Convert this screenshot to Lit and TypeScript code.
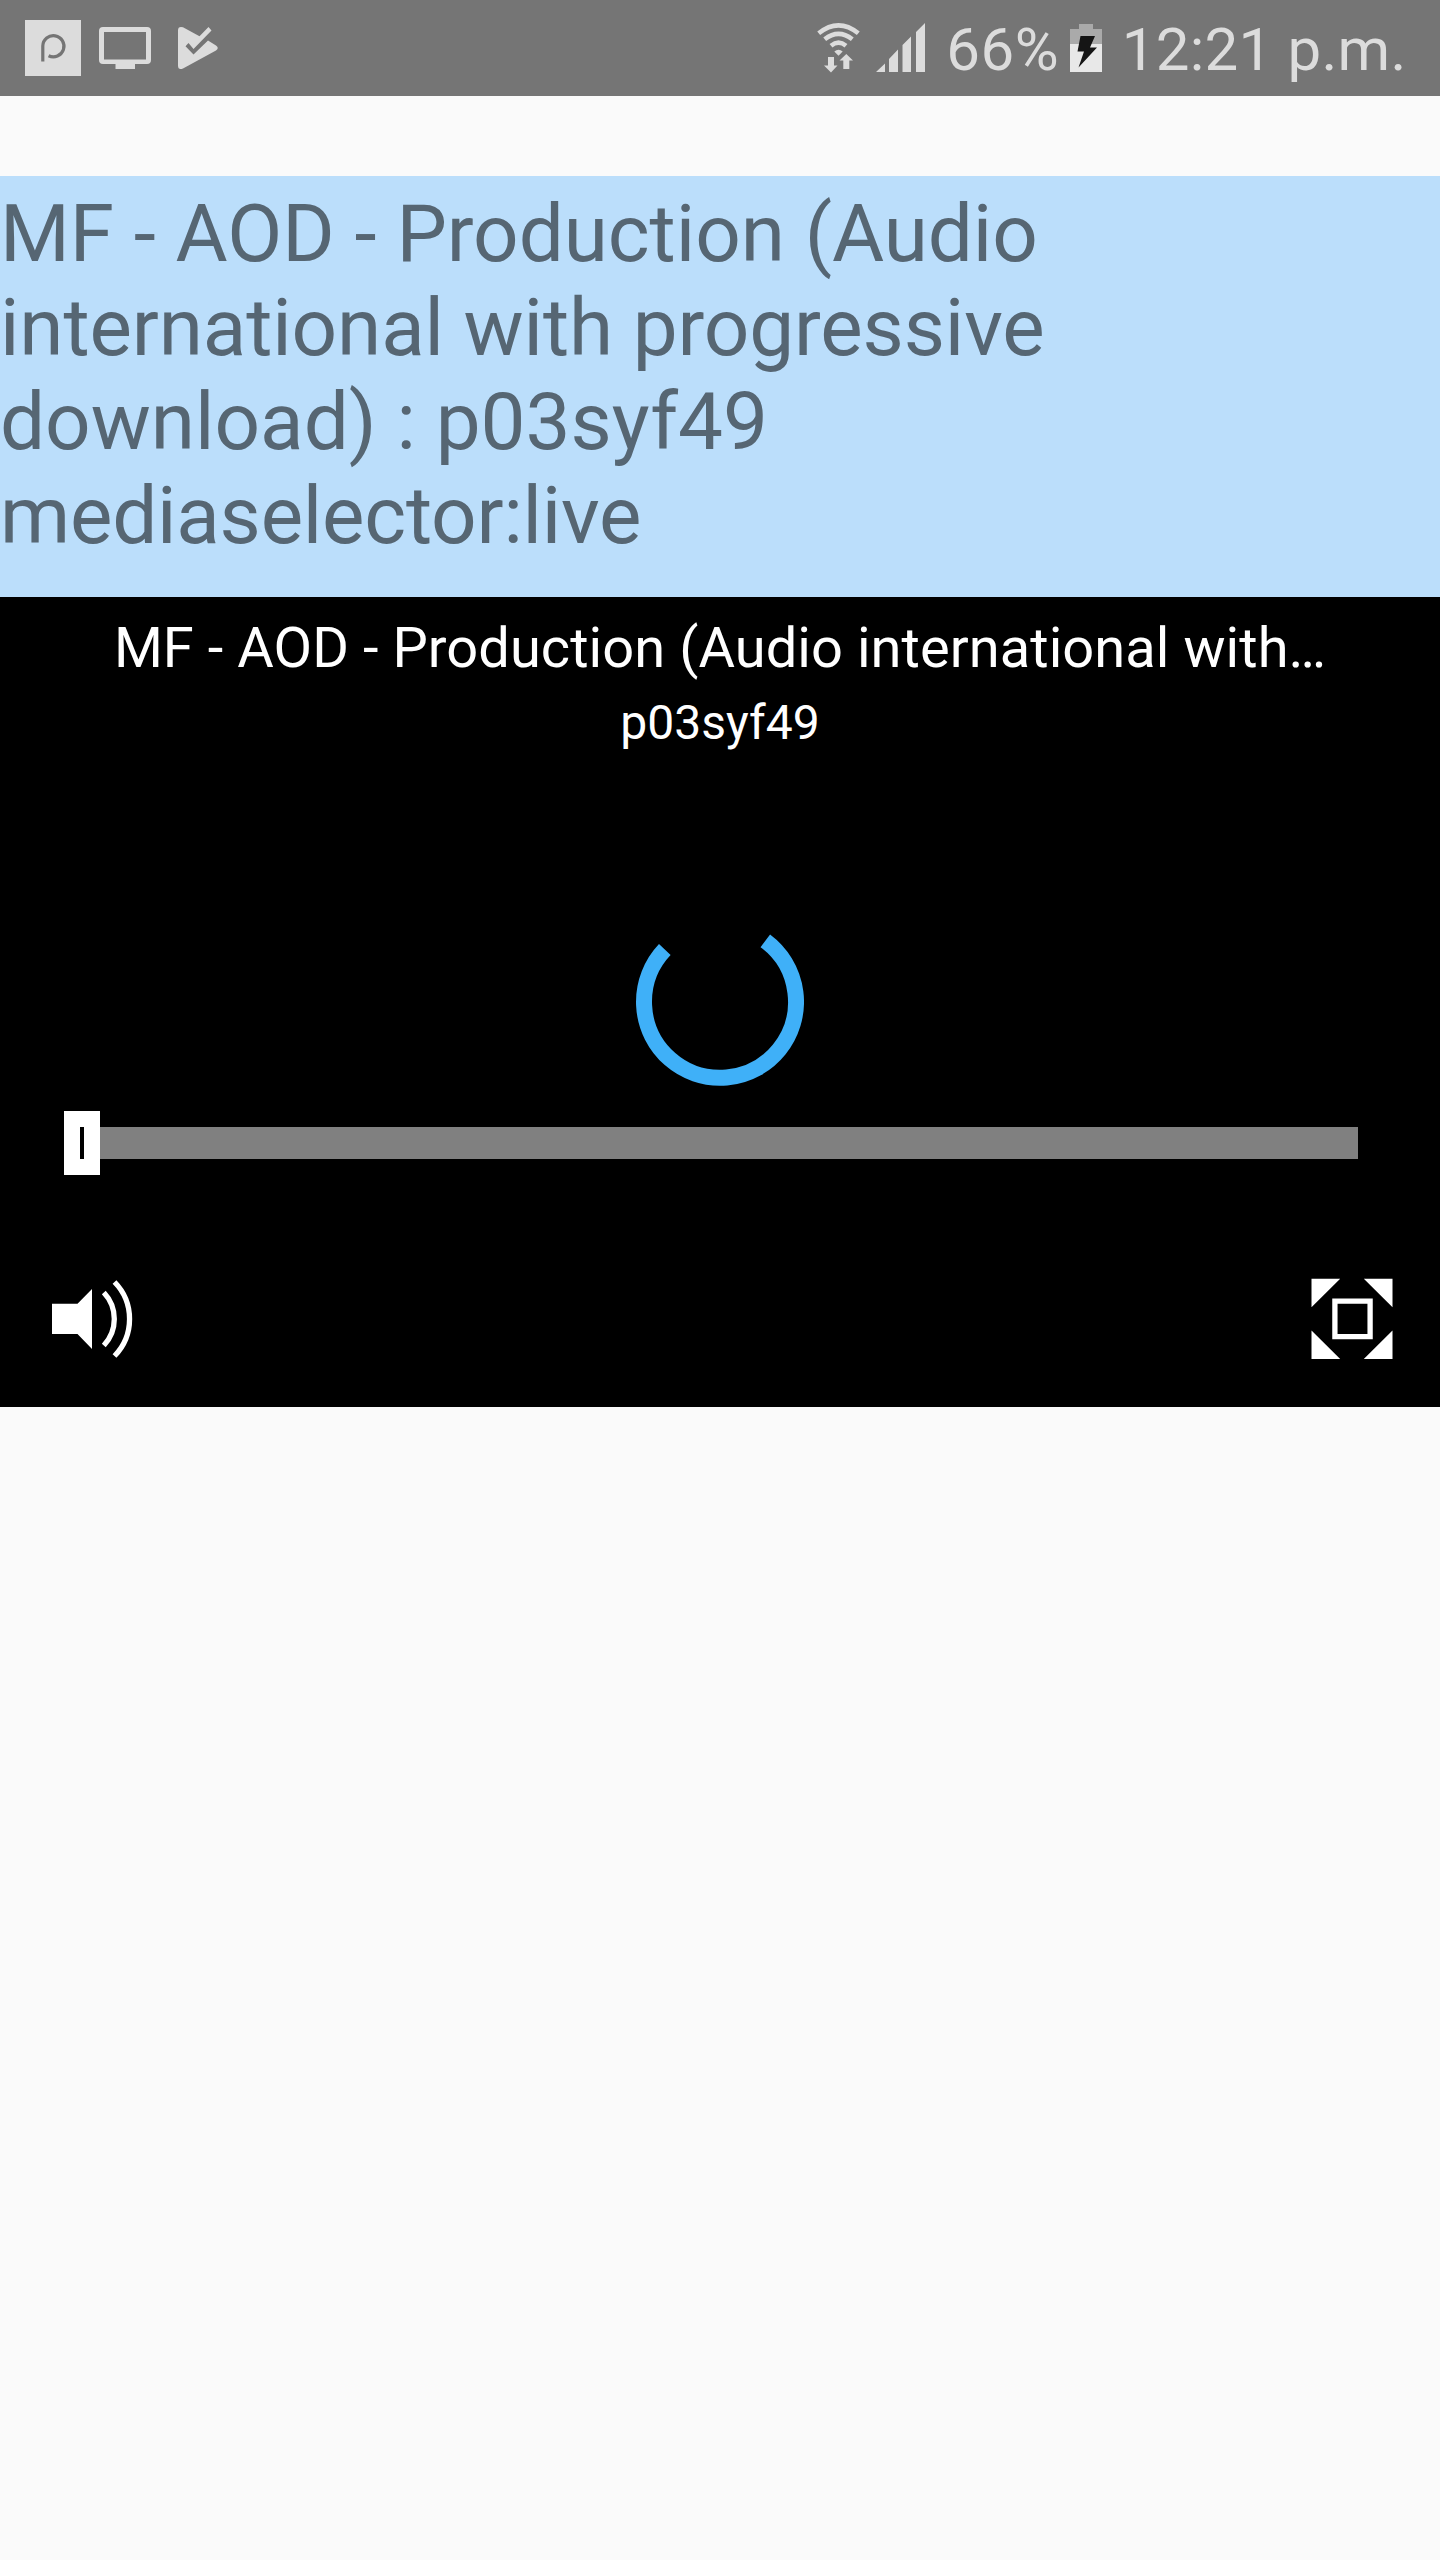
import { LitElement, html, css } from "lit";
import { customElement, property } from "lit/decorators.js";

@customElement("status-bar")
class StatusBar extends LitElement {
  static styles = css`
    :host {
      display: flex;
      justify-content: space-between;
      box-sizing: border-box;
      height: 96px;
      padding: 0 33.5px 0 25px;
      background: #757575;
      color: #dcdcdc;
      font: 60px/96px Roboto, sans-serif;
      white-space: pre;
    }
    .side {
      display: flex;
      align-items: flex-start;
    }
    svg {
      display: block;
      flex: none;
    }
    .percent {
      width: 108px;
      margin: 2px 15.5px 0 19px;
      letter-spacing: 0.5px;
    }
    .clock {
      margin-top: 2px;
      margin-left: 18px;
      letter-spacing: 0.25px;
    }
  `;
  render() {
    return html`
      <div class="side">
        <svg width="200" height="96" viewBox="25 0 200 96" fill="#dcdcdc">
          <path d="M25 20h56v56H25z" />
          <path d="M42.8 61.500V46A10.600 10.600 0 1 1 48.600 55.700" fill="none" stroke="#757575" stroke-width="3.200" />
          <path fill-rule="evenodd" d="M103 27h44a4 4 0 0 1 4 4v29a4 4 0 0 1-4 4h-12v5h-19.500v-5H103a4 4 0 0 1-4-4V31a4 4 0 0 1 4-4zM104 32v27.500h42V32z" />
          <path d="M178 30.500Q178 26 183 27.300L199.500 36.200L208.500 27L211.500 30.500L193.500 49L188.500 43L185.500 46.300L193.500 54.500L208 40.500L216 45.500Q219.500 48 216 50.500L183 68.500Q178 70.500 178 65.500z" />
        </svg>
      </div>
      <div class="side">
        <svg width="112" height="96" viewBox="816 0 112 96" fill="#dcdcdc">
          <g fill="none" stroke="#dcdcdc" stroke-width="4.600">
            <path d="M819.700 33.300Q839.500 17.500 859.300 33.300" />
            <path d="M825.700 39.300Q839.500 28.500 853.300 39.300" />
            <path d="M832 45.700Q839.500 39.700 847 45.700" />
          </g>
          <path d="M835.300 51.600Q839.500 48 843.700 51.600L839.500 55.700z" />
          <path d="M829 57h6v8.500h3.500L832 72.500l-7-7h4zM844.300 69h6v-8.500h3.700L847.300 54l-6.800 6.500h3.800z" />
          <path d="M877 72l9-8.500V72zM890 72V59l9-9.500V72zM903.500 72V45l8.500-8.500V72zM917 72V32l9-9v49z" />
        </svg>
        <span class="percent">66%</span>
        <svg width="34" height="96" viewBox="1070 0 34 96">
          <path d="M1070 44V29h9v-5h14v5h9v15z" fill="#aaaaaa" />
          <path d="M1070 44h32v28h-32z" fill="#e8e8e8" />
          <path d="M1080.500 36h14.500l-5 11.500h7L1078.500 67.500l5.500-16h-6.500z" fill="#151515" />
        </svg>
        <span class="clock">12:21 p.m.</span>
      </div>
    `;
  }
}

@customElement("media-player")
class MediaPlayer extends LitElement {
  @property() heading = "";
  @property() subheading = "";

  static styles = css`
    :host {
      display: flex;
      flex-direction: column;
      box-sizing: border-box;
      height: 810px;
      padding-top: 18px;
      background: #000;
      color: #fff;
      font-family: Roboto, sans-serif;
      text-align: center;
      white-space: nowrap;
    }
    svg {
      display: block;
    }
    .title {
      font-size: 56px;
      line-height: 66px;
      letter-spacing: 0.06px;
    }
    .subtitle {
      margin-top: 14px;
      font-size: 48px;
      line-height: 56px;
    }
    .spinner {
      align-self: center;
      margin-top: 167px;
    }
    .seek {
      display: flex;
      align-items: center;
      margin: 25px 82px 0 64px;
    }
    .thumb {
      display: flex;
      align-items: center;
      justify-content: center;
      width: 36px;
      height: 64px;
      background: #fff;
    }
    .grip {
      width: 4px;
      height: 32px;
      background: #000;
    }
    .track {
      flex: 1;
      height: 32px;
      background: #808080;
    }
    .controls {
      display: flex;
      justify-content: space-between;
      margin: 101px 44px 0 50px;
    }
  `;
  render() {
    return html`
      <div class="title">${this.heading}</div>
      <div class="subtitle">${this.subheading}</div>
      <svg class="spinner" width="168" height="168" viewBox="-84 -84 168 168">
        <path d="M45.300-61.200A76 76 0 1 1-55.200-52.400" fill="none" stroke="#3fb0f8" stroke-width="16" />
      </svg>
      <div class="seek">
        <div class="thumb"><div class="grip"></div></div>
        <div class="track"></div>
      </div>
      <div class="controls">
        <svg width="86" height="86" viewBox="50 1276 86 86">
          <path d="M52 1303.700h25.500L92 1289v60l-14.500-15H52z" fill="#fff" />
          <path d="M103.800 1292.500A38.700 38.700 0 0 1 103.800 1345.500M114.500 1282A53 53 0 0 1 114.500 1356" fill="none" stroke="#fff" stroke-width="5.300" />
        </svg>
        <svg width="86" height="86" viewBox="1310 1276 86 86">
          <path d="M1311.500 1278.800h28.700l-28.700 28.500zM1392.500 1278.800v28.500l-28.700-28.500zM1311.500 1359v-28.500l28.700 28.500zM1392.500 1359h-28.700l28.700-28.500z" fill="#fff" />
          <path d="M1334.900 1301.200h35.200v35.500h-35.200z" fill="none" stroke="#fff" stroke-width="5.300" />
        </svg>
      </div>
    `;
  }
}

@customElement("app-root")
class AppRoot extends LitElement {
  static styles = css`
    :host {
      display: block;
      height: 2560px;
      background: #fafafa;
    }
    .description {
      box-sizing: border-box;
      height: 421px;
      margin-top: 80px;
      padding-top: 11px;
      background: #bbdefb;
      color: #566673;
      font: 80px/94px Roboto, sans-serif;
    }
    .snug {
      letter-spacing: -0.05px;
    }
    .tight {
      letter-spacing: -0.12px;
    }
    .tighter {
      letter-spacing: -0.22px;
    }
  `;
  render() {
    return html`
      <status-bar></status-bar>
      <div class="description">
        <span class="snug">MF - AOD - Production (Audio</span><br />
        <span class="tight">international with progressive</span><br />
        <span>download) : p03syf49</span><br />
        <span class="tighter">mediaselector:live</span>
      </div>
      <media-player
        heading="MF - AOD - Production (Audio international with…"
        subheading="p03syf49"
      ></media-player>
    `;
  }
}
